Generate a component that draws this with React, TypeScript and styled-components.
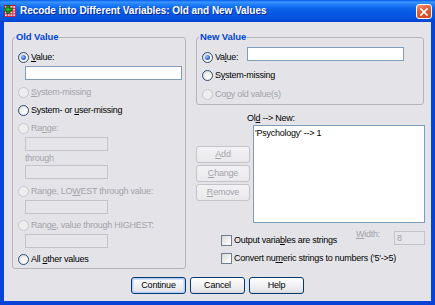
import React from 'react';
import styled, { createGlobalStyle, css } from 'styled-components';

const FONT = `"Liberation Sans", Arial, sans-serif`;

const Global = createGlobalStyle`
  html, body { margin: 0; padding: 0; background: #fff; }
  body { width: 435px; height: 305px; overflow: hidden; font-family: ${FONT}; }
  * { box-sizing: border-box; }
`;

const Window = styled.div`
  width: 435px;
  height: 305px;
  display: flex;
  flex-direction: column;
  background: #0842d6;
`;

const TitleBar = styled.div`
  height: 22px;
  flex: none;
  display: flex;
  align-items: center;
  padding: 0 3px 0 4px;
  background: linear-gradient(
    180deg,
    #0058ee 0px,
    #3d95ff 2px,
    #2483fa 4px,
    #0d66ea 8px,
    #055ae5 13px,
    #0553de 18px,
    #0343d0 22px
  );
`;

const TitleText = styled.span`
  flex: 1;
  margin-left: 4px;
  color: #fff;
  font: bold 10px/14px ${FONT};
  letter-spacing: -0.05px;
  white-space: nowrap;
  text-shadow: 1px 1px 0 #0a2a98;
`;

const CloseButton = styled.div`
  width: 16px;
  height: 15px;
  margin-top: 1px;
  border: 1px solid #fff;
  border-radius: 3px;
  background: linear-gradient(160deg, #f09a7c 0%, #e2643d 35%, #d0461f 100%);
  display: flex;
  align-items: center;
  justify-content: center;
`;

const Frame = styled.div`
  flex: 1;
  display: flex;
  border: 4px solid #0842d6;
  border-top: 0;
  box-shadow: inset 1px 0 0 #0b2fb8;
`;

const Client = styled.div`
  flex: 1;
  display: flex;
  flex-direction: column;
  background: #e4e4e8;
  padding: 9px 6px 0 8px;
  font-size: 9px;
  letter-spacing: -0.25px;
  line-height: 12px;
  color: #000;
`;

const MainRow = styled.div`
  display: flex;
  gap: 10px;
`;

const Group = styled.fieldset<{ $w: number }>`
  margin: 0;
  width: ${p => p.$w}px;
  border: 1px solid #b4b4ba;
  border-radius: 3px;
  display: flex;
  flex-direction: column;
  min-width: 0;
`;

const OldGroup = styled(Group)`
  padding: 5px 2px 0 5px;
`;

const NewGroup = styled(Group)`
  padding: 5px 2px 1px 5px;
  margin-right: 1px;
`;

const Legend = styled.legend`
  padding: 0 1px;
  margin-left: -3px;
  font: bold 9.5px/12px ${FONT};
  letter-spacing: -0.1px;
  color: #0046d5;
`;

const RadioRow = styled.label<{ $disabled?: boolean; $mt?: number }>`
  display: flex;
  align-items: center;
  gap: 2px;
  height: 18px;
  flex: none;
  margin-top: ${p => p.$mt ?? 0}px;
  color: ${p => (p.$disabled ? '#a3a3a8' : '#000')};
  white-space: nowrap;
`;

const RadioDot = styled.span<{ $checked?: boolean; $disabled?: boolean }>`
  width: 11px;
  height: 11px;
  flex: none;
  border-radius: 50%;
  border: 1px solid ${p => (p.$disabled ? '#c6c6cb' : '#2c4a72')};
  background: ${p =>
    p.$disabled
      ? '#eeeef0'
      : 'radial-gradient(circle at 70% 70%, #ffffff 0%, #f4f4f2 40%, #d6d6d2 100%)'};
  display: flex;
  align-items: center;
  justify-content: center;
  ${p =>
    p.$checked &&
    css`
      &::after {
        content: '';
        width: 5px;
        height: 5px;
        border-radius: 50%;
        background: radial-gradient(circle at 35% 35%, #9cc0ff 0%, #3f72e0 50%, #1d45b8 100%);
      }
    `}
`;

const CheckBox = styled.span`
  width: 11px;
  height: 11px;
  flex: none;
  border: 1px solid #6f7d93;
  background: linear-gradient(135deg, #d8d8d4 0%, #f2f2f0 60%, #ffffff 100%);
`;

const Field = styled.div<{ $w: number; $disabled?: boolean; $ml?: number }>`
  width: ${p => p.$w}px;
  height: 14px;
  flex: none;
  margin-left: ${p => p.$ml ?? 0}px;
  border: 1px solid ${p => (p.$disabled ? '#c3c3c8' : '#7f9db9')};
  background: ${p => (p.$disabled ? '#e6e6ea' : '#fff')};
  color: #a3a3a8;
  font-size: 9px;
  line-height: 12px;
  padding-left: 2px;
`;

const PlainText = styled.div<{ $disabled?: boolean; $ml?: number }>`
  height: 14px;
  line-height: 14px;
  margin-left: ${p => p.$ml ?? 0}px;
  color: ${p => (p.$disabled ? '#a3a3a8' : '#000')};
`;

const U = styled.span`
  text-decoration: underline;
  text-underline-offset: 1px;
`;

const RightCol = styled.div`
  width: 229px;
  display: flex;
  flex-direction: column;
`;

const ValueLabel = styled.span`
  width: 30px;
  flex: none;
`;

const TopField = styled(Field)`
  align-self: flex-start;
  margin-top: -1px;
`;

const ListLabel = styled.div`
  margin-top: 7px;
  padding-left: 51px;
  height: 12px;
  line-height: 12px;
`;

const ListRow = styled.div`
  display: flex;
  margin-top: 1px;
`;

const ButtonCol = styled.div`
  width: 54px;
  padding-top: 21px;
  display: flex;
  flex-direction: column;
  gap: 2px;
`;

const ListBox = styled.div`
  width: 172px;
  height: 98px;
  margin-left: 3px;
  border: 1px solid #7f9db9;
  background: #fff;
  padding: 1px 1px;
`;

const ListItem = styled.div`
  height: 12px;
  line-height: 12px;
`;

const Button = styled.button<{ $w?: number; $default?: boolean }>`
  width: ${p => (p.$w ? `${p.$w}px` : '100%')};
  height: 17px;
  padding: 0;
  font: 9px/15px ${FONT};
  letter-spacing: -0.2px;
  color: #000;
  border: 1px solid #003c74;
  border-radius: 3px;
  background: linear-gradient(180deg, #ffffff 0%, #f4f4f6 40%, #e6e6ea 85%, #d4d4da 100%);
  ${p =>
    p.$default &&
    css`
      box-shadow: inset 0 0 0 1px #b6cdf5, inset 0 0 0 2px #d2e0fa;
    `}
  &:disabled {
    color: #a3a3a8;
    border-color: #c3c3c8;
    background: linear-gradient(180deg, #f2f2f4 0%, #e9e9ec 100%);
  }
`;

const CheckRow = styled.div<{ $mt?: number }>`
  display: flex;
  align-items: flex-start;
  margin-top: ${p => p.$mt ?? 0}px;
`;

const CheckLabel = styled.label`
  display: flex;
  align-items: center;
  gap: 2px;
  height: 18px;
  margin-left: 25px;
  white-space: nowrap;
`;

const WidthLabel = styled.span`
  margin-left: auto;
  width: 38px;
  margin-top: -3px;
  line-height: 12px;
  color: #a3a3a8;
`;

const Footer = styled.div`
  display: flex;
  justify-content: center;
  gap: 4px;
  margin-top: 8px;
  padding-right: 2px;
`;

const AppIcon = () => (
  <svg width="12" height="12" viewBox="0 0 12 12">
    <rect x="0" y="0" width="12" height="12" fill="#c4143c" />
    {[0, 1, 2, 3].map(r =>
      [0, 1, 2, 3].map(c => (
        <rect key={`${r}-${c}`} x={1 + c * 2.75} y={1 + r * 2.75} width="1.9" height="1.9" fill="#f6d6dc" />
      ))
    )}
    <rect x="2.5" y="0.5" width="3" height="8" fill="#1c9a1c" stroke="#064d06" strokeWidth="0.6" />
    <rect x="0" y="3" width="8" height="3" fill="#1c9a1c" stroke="#064d06" strokeWidth="0.6" />
    <rect x="2.8" y="3.3" width="2.4" height="2.4" fill="#2fc02f" />
  </svg>
);

const CloseIcon = () => (
  <svg width="8" height="8" viewBox="0 0 8 8">
    <path d="M1 1 L7 7 M7 1 L1 7" stroke="#fff" strokeWidth="1.7" strokeLinecap="square" />
  </svg>
);

export default function App() {
  return (
    <>
      <Global />
      <Window>
        <TitleBar>
          <AppIcon />
          <TitleText>Recode into Different Variables: Old and New Values</TitleText>
          <CloseButton>
            <CloseIcon />
          </CloseButton>
        </TitleBar>
        <Frame>
          <Client>
            <MainRow>
              <OldGroup $w={174}>
                <Legend>Old Value</Legend>
                <RadioRow>
                  <RadioDot $checked />
                  <span>
                    <U>V</U>alue:
                  </span>
                </RadioRow>
                <Field $w={157} $ml={7} />
                <RadioRow $disabled $mt={3}>
                  <RadioDot $disabled />
                  <span>
                    <U>S</U>ystem-missing
                  </span>
                </RadioRow>
                <RadioRow>
                  <RadioDot />
                  <span>
                    System- or <U>u</U>ser-missing
                  </span>
                </RadioRow>
                <RadioRow $disabled>
                  <RadioDot $disabled />
                  <span>
                    Ra<U>n</U>ge:
                  </span>
                </RadioRow>
                <Field $w={83} $ml={7} $disabled />
                <PlainText $disabled $ml={7}>
                  through
                </PlainText>
                <Field $w={83} $ml={7} $disabled />
                <RadioRow $disabled $mt={3}>
                  <RadioDot $disabled />
                  <span>
                    Range, LO<U>W</U>EST through value:
                  </span>
                </RadioRow>
                <Field $w={83} $ml={7} $disabled />
                <RadioRow $disabled $mt={2}>
                  <RadioDot $disabled />
                  <span>
                    Rang<U>e</U>, value through HIGHEST:
                  </span>
                </RadioRow>
                <Field $w={83} $ml={7} $disabled />
                <RadioRow $mt={2}>
                  <RadioDot />
                  <span>
                    All <U>o</U>ther values
                  </span>
                </RadioRow>
              </OldGroup>

              <RightCol>
                <NewGroup $w={228}>
                  <Legend>New Value</Legend>
                  <RadioRow>
                    <RadioDot $checked />
                    <ValueLabel>
                      Va<U>l</U>ue:
                    </ValueLabel>
                    <TopField $w={157} />
                  </RadioRow>
                  <RadioRow>
                    <RadioDot />
                    <span>
                      S<U>y</U>stem-missing
                    </span>
                  </RadioRow>
                  <RadioRow $disabled $mt={1}>
                    <RadioDot $disabled />
                    <span>
                      Co<U>p</U>y old value(s)
                    </span>
                  </RadioRow>
                </NewGroup>

                <ListLabel>
                  Ol<U>d</U> --&gt; New:
                </ListLabel>
                <ListRow>
                  <ButtonCol>
                    <Button disabled>
                      <U>A</U>dd
                    </Button>
                    <Button disabled>
                      <U>C</U>hange
                    </Button>
                    <Button disabled>
                      <U>R</U>emove
                    </Button>
                  </ButtonCol>
                  <ListBox>
                    <ListItem>'Psychology' --&gt; 1</ListItem>
                  </ListBox>
                </ListRow>

                <CheckRow $mt={8}>
                  <CheckLabel>
                    <CheckBox />
                    <span>
                      Output varia<U>b</U>les are strings
                    </span>
                  </CheckLabel>
                  <WidthLabel>
                    <U>W</U>idth:
                  </WidthLabel>
                  <Field $w={31} $disabled>
                    8
                  </Field>
                </CheckRow>
                <CheckRow>
                  <CheckLabel>
                    <CheckBox />
                    <span>
                      Convert nu<U>m</U>eric strings to numbers ('5'-&gt;5)
                    </span>
                  </CheckLabel>
                </CheckRow>
              </RightCol>
            </MainRow>

            <Footer>
              <Button $w={55} $default>
                Continue
              </Button>
              <Button $w={55}>Cancel</Button>
              <Button $w={55}>Help</Button>
            </Footer>
          </Client>
        </Frame>
      </Window>
    </>
  );
}
